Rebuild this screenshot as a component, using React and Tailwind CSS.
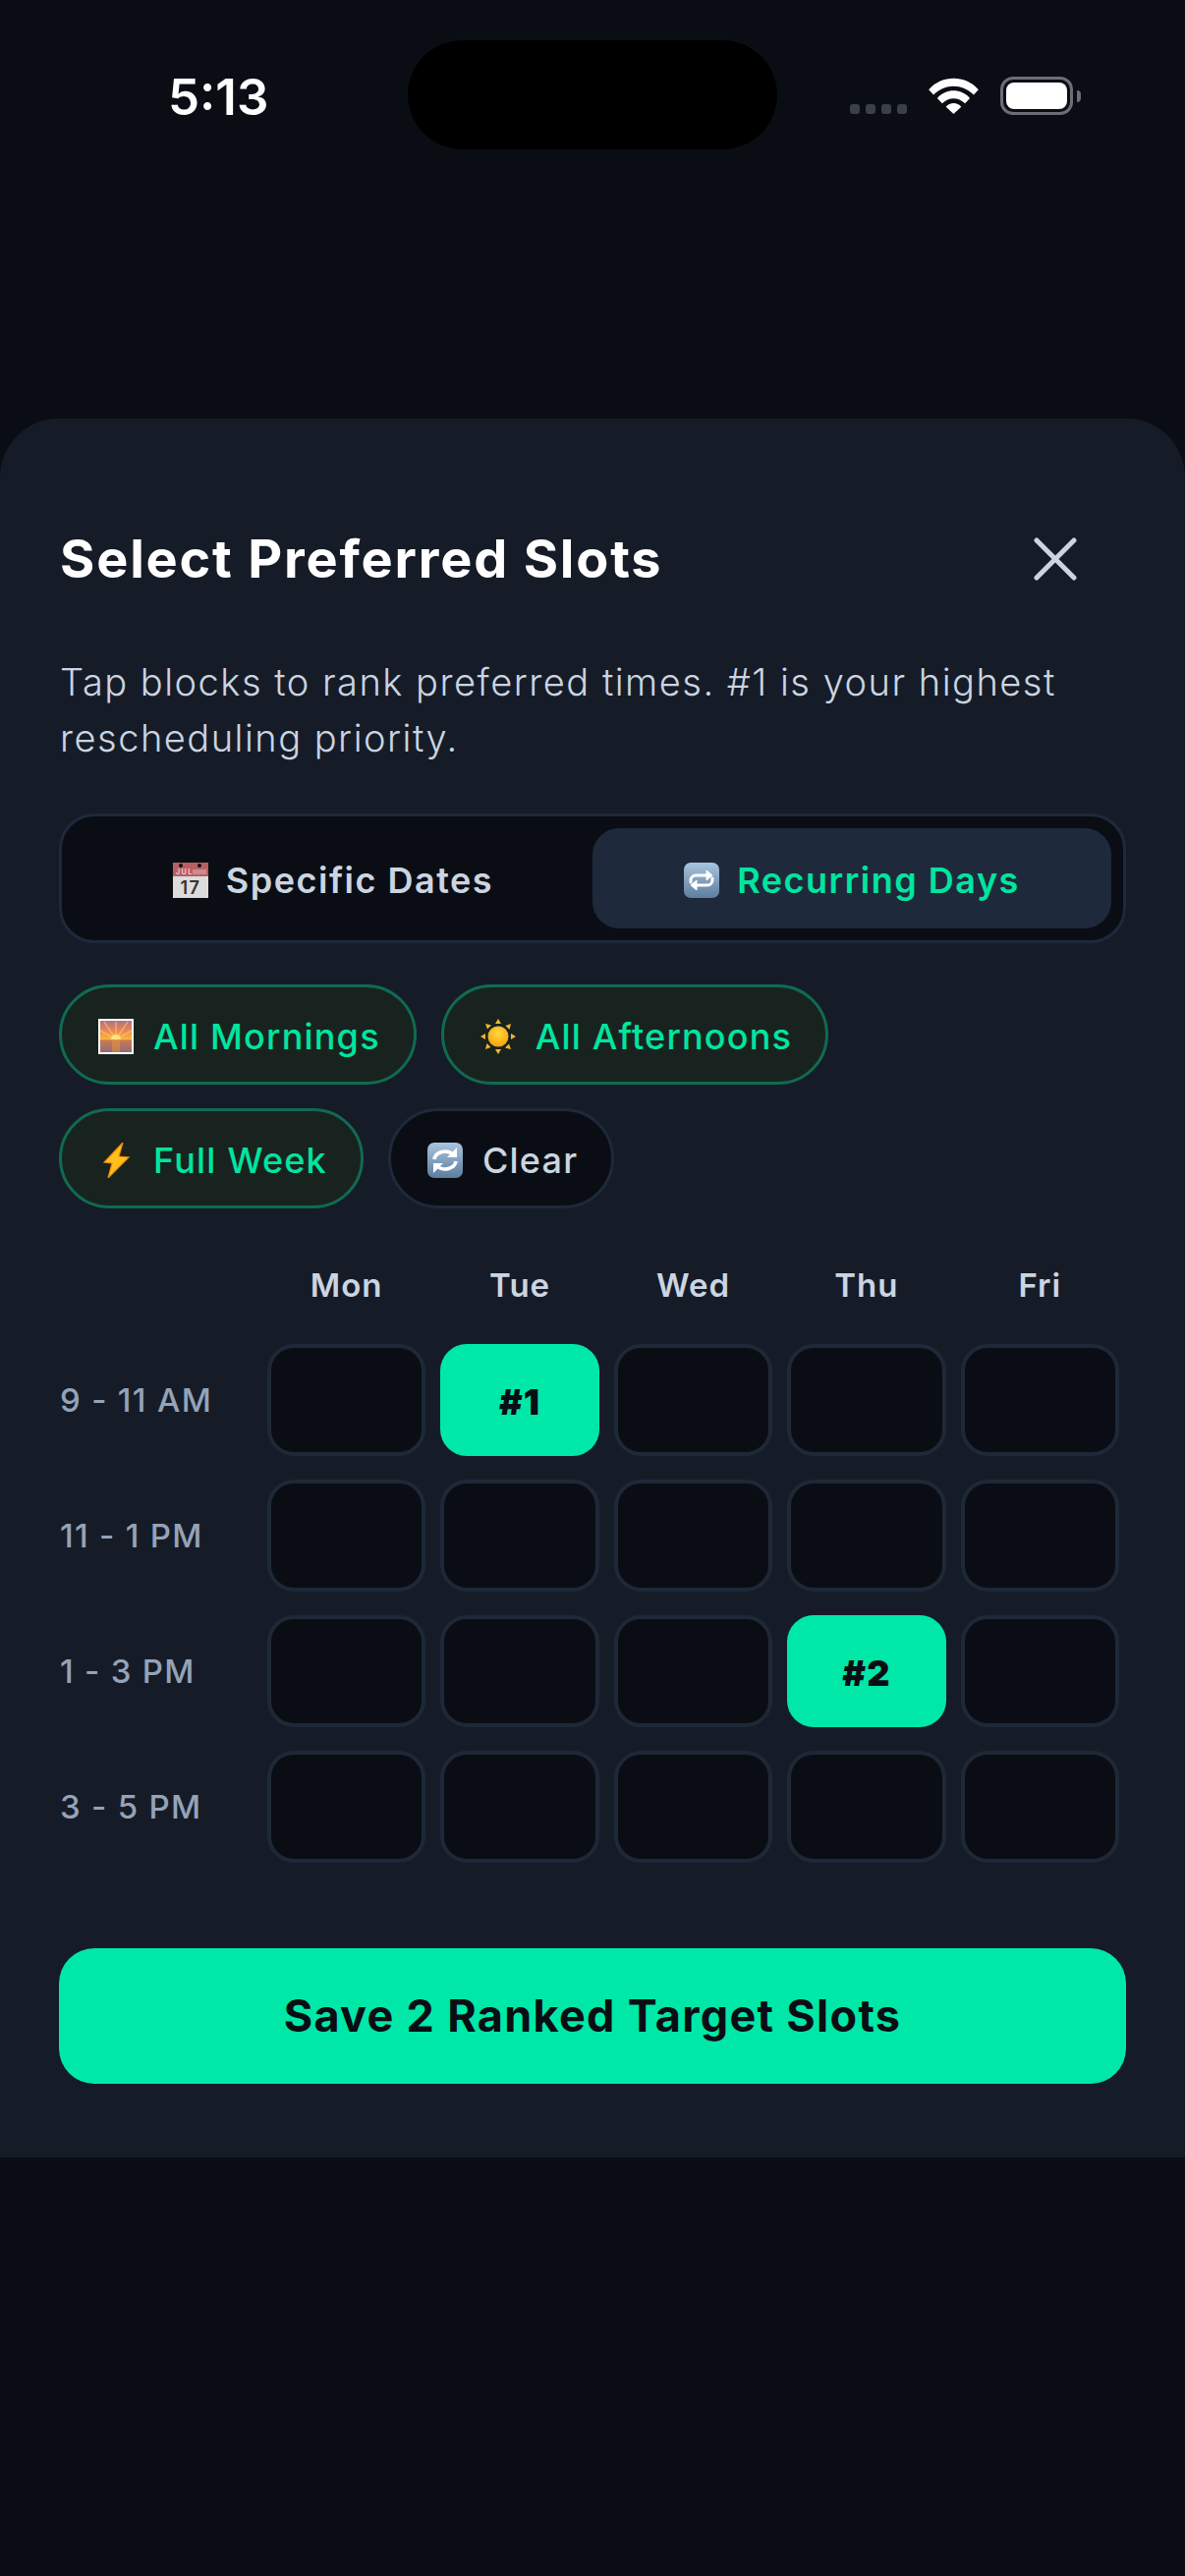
import React from "react";

const Cal = () => (
  <svg width="36" height="36" viewBox="0 0 36 36" className="shrink-0">
    <rect x="0" y="0" width="36" height="36" fill="#dcdcdc" />
    <rect x="0" y="0" width="36" height="14" fill="#b95f62" />
    <circle cx="8" cy="3" r="2" fill="#111" />
    <circle cx="27" cy="3" r="2" fill="#111" />
    <text x="3" y="12" fontSize="7" fill="#f3dada" fontFamily="Inter, sans-serif">JUL</text>
    <rect x="20" y="7" width="14" height="5" fill="#cf8a8c" />
    <text x="18" y="32" fontSize="18" textAnchor="middle" fill="#333" fontFamily="Inter, sans-serif">17</text>
  </svg>
);
const Repeat = () => (
  <svg width="36" height="36" viewBox="0 0 36 36" className="shrink-0">
    <defs>
      <linearGradient id="rg" x1="0" y1="0" x2="0" y2="1">
        <stop offset="0" stopColor="#a9c4de" />
        <stop offset="1" stopColor="#5d7e9e" />
      </linearGradient>
    </defs>
    <rect width="36" height="36" rx="7" fill="url(#rg)" />
    <path d="M7 20v-2a5 5 0 0 1 5-5h12" fill="none" stroke="#fff" strokeWidth="3" strokeLinecap="round" />
    <path d="M23 8l6 5-6 5z" fill="#fff" stroke="#fff" strokeLinejoin="round" />
    <path d="M29 16v2a5 5 0 0 1-5 5H12" fill="none" stroke="#fff" strokeWidth="3" strokeLinecap="round" />
    <path d="M13 18l-6 5 6 5z" fill="#fff" stroke="#fff" strokeLinejoin="round" />
  </svg>
);
const Refresh = () => (
  <svg width="36" height="36" viewBox="0 0 36 36" className="shrink-0">
    <defs>
      <linearGradient id="rf" x1="0" y1="0" x2="0" y2="1">
        <stop offset="0" stopColor="#a9c4de" />
        <stop offset="1" stopColor="#5d7e9e" />
      </linearGradient>
    </defs>
    <rect width="36" height="36" rx="7" fill="url(#rf)" />
    <path d="M7 17a11 9 0 0 1 19-5" fill="none" stroke="#fff" strokeWidth="3.6" />
    <path d="M30 5v10h-10z" fill="#fff" />
    <path d="M29 19a11 9 0 0 1-19 5" fill="none" stroke="#fff" strokeWidth="3.6" />
    <path d="M6 31V21h10z" fill="#fff" />
  </svg>
);
const Sunrise = () => (
  <svg width="36" height="36" viewBox="0 0 36 36" className="shrink-0">
    <defs>
      <linearGradient id="sr" x1="0" y1="0" x2="0" y2="1">
        <stop offset="0" stopColor="#a8708a" />
        <stop offset="0.35" stopColor="#f08a50" />
        <stop offset="0.58" stopColor="#f9b53f" />
        <stop offset="0.62" stopColor="#c97a4f" />
        <stop offset="1" stopColor="#8c6a80" />
      </linearGradient>
    </defs>
    <rect x="1" y="1" width="34" height="34" fill="url(#sr)" stroke="#fff" strokeWidth="2" />
    <path d="M18 21L6 3M18 21V3M18 21L30 3M18 21L2 12M18 21L34 12" stroke="#fbc97a" strokeWidth="1.5" opacity="0.6" />
    <path d="M13 21a5 5 0 0 1 10 0z" fill="#ffe27a" />
    <rect x="14" y="22" width="8" height="12" fill="#e8923f" opacity="0.55" />
  </svg>
);
const Sun = () => (
  <svg width="36" height="36" viewBox="0 0 36 36" className="shrink-0">
    <defs>
      <radialGradient id="su" cx="0.5" cy="0.35" r="0.7">
        <stop offset="0" stopColor="#ffd93b" />
        <stop offset="1" stopColor="#f59e0b" />
      </radialGradient>
    </defs>
    <path d="M18 0l3 5h-6zM18 36l-3-5h6zM0 18l5-3v6zM36 18l-5 3v-6zM5 5l6 1.500-4 4zM31 5l-1.500 6-4-4zM5 31l1.500-6 4 4zM31 31l-6-1.500 4-4z" fill="#f4b62c" />
    <circle cx="18" cy="18" r="10.500" fill="url(#su)" />
  </svg>
);
const Zap = () => (
  <svg width="36" height="36" viewBox="0 0 36 36" className="shrink-0">
    <path d="M25 0L6 20l8 1L10 36l21-21-10-1z" fill="#ffc01f" stroke="#f08a00" strokeWidth="1.200" />
  </svg>
);

const Chip = ({ icon, label, active }) => (
  <div
    className={`h-[102px] rounded-full border-[3px] flex items-center gap-[20px] pl-[37px] pr-[34px] pt-[3px] text-[36px] font-medium tracking-[1.2px] ${
      active ? "bg-[#18231f] border-[#0f6b52] text-[#00e5a0]" : "bg-[#0a0e14] border-[#1e293b] text-[#cbd5e1]"
    }`}
  >
    {icon}
    <span>{label}</span>
  </div>
);

const days = ["Mon", "Tue", "Wed", "Thu", "Fri"];
const rows = [
  { label: "9 - 11 AM", marks: { 1: "#1" } },
  { label: "11 - 1 PM", marks: {} },
  { label: "1 - 3 PM", marks: { 3: "#2" } },
  { label: "3 - 5 PM", marks: {} },
];

export default function App() {
  return (
    <div className="min-h-[2622px] bg-[#0a0e14] font-['Inter',sans-serif]">
      <div className="relative h-[426px]">
        <div className="absolute left-[415px] top-[41px] w-[376px] h-[111px] rounded-[56px] bg-black" />
        <div className="absolute left-[171px] top-[69px] text-[51px] leading-[60px] font-semibold text-white">5:13</div>
        <div className="absolute left-[865px] top-[106px] flex gap-[6px]">
          {[0, 1, 2, 3].map((i) => (
            <div key={i} className="w-[10px] h-[10px] rounded-[3px] bg-[#3b4047]" />
          ))}
        </div>
        <svg className="absolute left-[945px] top-[79px]" width="51" height="37" viewBox="0 0 52 38">
          <path d="M0 12.500C14-3 38-3 52 12.500l-5 5.500C35 6 17 6 5 18z" fill="#fff" />
          <path d="M9 21.500C18 11 34 11 43 21.500l-5 5.500C31 20 21 20 14 27z" fill="#fff" />
          <path d="M18 30.500c4-5 12-5 16 0L26 38z" fill="#fff" />
        </svg>
        <div className="absolute left-[1018px] top-[78px] w-[74px] h-[39px] rounded-[13px] border-[3px] border-[#6b6f75] p-[3px]">
          <div className="w-full h-full rounded-[8px] bg-white" />
        </div>
        <div className="absolute left-[1096px] top-[92px] w-[4px] h-[12px] rounded-r-full bg-[#6b6f75]" />
      </div>

      <div className="h-[1770px] bg-[#161c27] rounded-t-[60px] px-[60px]">
        <div className="flex items-center justify-between pt-[108px] h-[178px]">
          <h1 className="ml-[1px] text-[54px] leading-[70px] font-bold text-white tracking-[1.8px]">Select Preferred Slots</h1>
          <svg width="44" height="44" viewBox="0 0 44 44" className="mr-[50px]">
            <path d="M3 3l38 38M41 3L3 41" stroke="#cbd5e1" strokeWidth="5" strokeLinecap="round" />
          </svg>
        </div>

        <p className="mt-[62px] ml-[1px] text-[38px] leading-[57px] text-[#cbd5e1] tracking-[1.5px] w-[1060px] font-light">
          Tap blocks to rank preferred times. #1 is your highest rescheduling priority.
        </p>

        <div className="mt-[48px] h-[132px] rounded-[36px] border-[3px] border-[#1e293b] bg-[#0a0e14] p-[12px] flex">
          <div className="flex-1 flex items-center justify-center gap-[18px] pt-[4px] text-[36px] font-semibold tracking-[1.5px] text-[#cbd5e1]">
            <Cal />
            <span>Specific Dates</span>
          </div>
          <div className="flex-1 flex items-center justify-center gap-[18px] pt-[4px] rounded-[27px] bg-[#1e293b] text-[36px] font-semibold tracking-[1.5px] text-[#00e5a0]">
            <Repeat />
            <span>Recurring Days</span>
          </div>
        </div>

        <div className="mt-[42px] flex flex-wrap gap-x-[25px] gap-y-[24px]">
          <Chip icon={<Sunrise />} label="All Mornings" active />
          <Chip icon={<Sun />} label="All Afternoons" active />
          <Chip icon={<Zap />} label="Full Week" active />
          <Chip icon={<Refresh />} label="Clear" />
        </div>

        <div className="mt-[60px] grid grid-cols-[197px_repeat(5,161.4px)] gap-x-[15px] gap-y-[24px]">
          <div className="h-[36px] mb-[18px]" />
          {days.map((d) => (
            <div key={d} className="h-[36px] mb-[18px] pt-[2px] flex items-center justify-center text-[33px] font-semibold tracking-[1px] text-[#cbd5e1]">
              {d}
            </div>
          ))}
          {rows.map((r) => (
            <React.Fragment key={r.label}>
              <div className="h-[114px] pl-[1px] pt-[2px] flex items-center text-[33px] font-medium tracking-[1.3px] text-[#94a3b8]">{r.label}</div>
              {days.map((d, i) =>
                r.marks[i] ? (
                  <div key={d} className="h-[114px] rounded-[27px] bg-[#00e8a8] pt-[3px] flex items-center justify-center text-[36px] font-black text-[#0a0e14] tracking-[1px]">
                    {r.marks[i]}
                  </div>
                ) : (
                  <div key={d} className="h-[114px] rounded-[27px] border-[4px] border-[#1e2836] bg-[#0a0e14]" />
                )
              )}
            </React.Fragment>
          ))}
        </div>

        <button className="mt-[87px] w-full h-[138px] rounded-[36px] bg-[#00e8a8] text-[45px] font-bold tracking-[1.3px] text-[#0a0e14]">
          Save 2 Ranked Target Slots
        </button>
      </div>
    </div>
  );
}
